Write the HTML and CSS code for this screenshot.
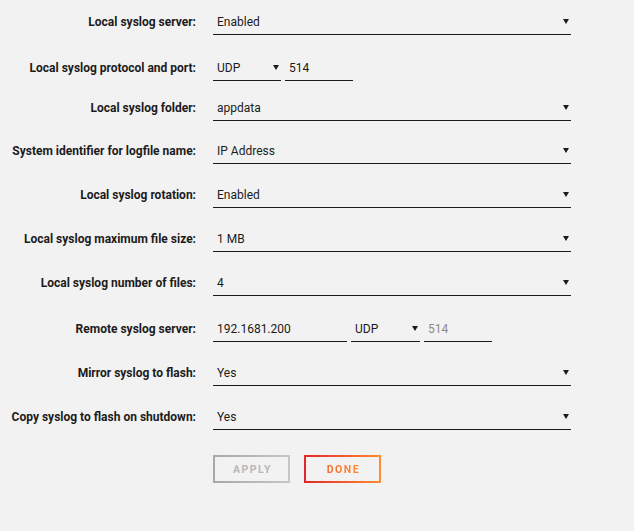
FILE: index.html
```html
<!DOCTYPE html>
<html>
<head>
<meta charset="utf-8">
<link rel="stylesheet" href="styles.css">
</head>
<body>
<form class="settings">
  <div class="row h46">
    <label class="lbl">Local syslog server:</label>
    <div class="ctl"><div class="sel w-full"><select><option>Enabled</option></select></div></div>
  </div>
  <div class="row h40">
    <label class="lbl">Local syslog protocol and port:</label>
    <div class="ctl"><div class="sel w-small"><select><option>UDP</option></select></div><input class="inp w-small" value="514"></div>
  </div>
  <div class="row h43">
    <label class="lbl">Local syslog folder:</label>
    <div class="ctl"><div class="sel w-full"><select><option>appdata</option></select></div></div>
  </div>
  <div class="row">
    <label class="lbl">System identifier for logfile name:</label>
    <div class="ctl"><div class="sel w-full"><select><option>IP Address</option></select></div></div>
  </div>
  <div class="row">
    <label class="lbl">Local syslog rotation:</label>
    <div class="ctl"><div class="sel w-full"><select><option>Enabled</option></select></div></div>
  </div>
  <div class="row">
    <label class="lbl">Local syslog maximum file size:</label>
    <div class="ctl"><div class="sel w-full"><select><option>1 MB</option></select></div></div>
  </div>
  <div class="row h46">
    <label class="lbl">Local syslog number of files:</label>
    <div class="ctl"><div class="sel w-full"><select><option>4</option></select></div></div>
  </div>
  <div class="row">
    <label class="lbl">Remote syslog server:</label>
    <div class="ctl"><input class="inp w-ip" value="192.1681.200"><div class="sel w-small2"><select><option>UDP</option></select></div><input class="inp w-small" placeholder="514"></div>
  </div>
  <div class="row">
    <label class="lbl">Mirror syslog to flash:</label>
    <div class="ctl"><div class="sel w-full"><select><option>Yes</option></select></div></div>
  </div>
  <div class="row">
    <label class="lbl">Copy syslog to flash on shutdown:</label>
    <div class="ctl"><div class="sel w-full"><select><option>Yes</option></select></div></div>
  </div>
  <div class="buttons">
    <button type="button" class="btn btn-apply" disabled>APPLY</button>
    <button type="button" class="btn btn-done"><span>DONE</span></button>
  </div>
</form>
</body>
</html>
```

FILE: styles.css
```css
html, body {
  margin: 0;
  padding: 0;
  background: #f2f2f2;
}
body {
  font-family: Roboto, "Noto Sans", sans-serif;
  font-size: 12px;
  color: #1c1b1b;
}
.settings {
  display: flex;
  flex-direction: column;
}
.row {
  display: grid;
  grid-template-columns: 196px 1fr;
  column-gap: 17px;
  align-items: start;
  height: 44px;
  padding-top: 9px;
  box-sizing: border-box;
}
.row.h46 { height: 46px; }
.row.h40 { height: 40px; }
.row.h43 { height: 43px; }
.lbl {
  text-align: right;
  font-weight: bold;
  white-space: nowrap;
  line-height: 26px;
}
.ctl {
  display: flex;
  gap: 4px;
  align-items: center;
}
.sel {
  position: relative;
  height: 26px;
  border-bottom: 1px solid #1c1b1b;
  box-sizing: border-box;
}
.sel select {
  appearance: none;
  -webkit-appearance: none;
  border: 0;
  background: transparent;
  font: inherit;
  color: #1c1b1b;
  width: 100%;
  height: 25px;
  padding: 0 0 0 4px;
  margin: 0;
  outline: none;
}
.sel::after {
  content: "";
  position: absolute;
  right: 2px;
  top: 10px;
  border-left: 3px solid transparent;
  border-right: 3px solid transparent;
  border-top: 5px solid #1c1b1b;
}
.inp {
  height: 26px;
  box-sizing: border-box;
  border: 0;
  border-bottom: 1px solid #1c1b1b;
  background: transparent;
  font: inherit;
  color: #1c1b1b;
  padding: 0 0 0 4px;
  margin: 0;
  outline: none;
}
.inp::placeholder {
  color: #8a8a8a;
}
.w-full { width: 358px; }
.w-small { width: 68px; }
.w-small2 { width: 69px; }
.w-ip { width: 134px; }
.buttons {
  display: flex;
  gap: 14px;
  padding: 16px 0 0 213px;
}
.btn {
  width: 77px;
  height: 28px;
  box-sizing: border-box;
  font-family: Roboto, "Noto Sans", sans-serif;
  font-weight: bold;
  font-size: 10.5px;
  letter-spacing: 1.5px;
  padding: 0 0 0 2px;
  border-radius: 3px;
  background: #f2f2f2;
}
.btn-apply {
  border: 2px solid #b8b8b8;
  color: #b8b8b8;
  border-image: linear-gradient(90deg, #a8a8a8, #c6c6c6) 1;
}
.btn-done {
  border: 2px solid transparent;
  border-image: linear-gradient(90deg, #e22828, #ff8c2f) 1;
}
.btn-done span {
  background: linear-gradient(90deg, #f56b2c, #ff8c2f);
  -webkit-background-clip: text;
  background-clip: text;
  color: transparent;
}
```
